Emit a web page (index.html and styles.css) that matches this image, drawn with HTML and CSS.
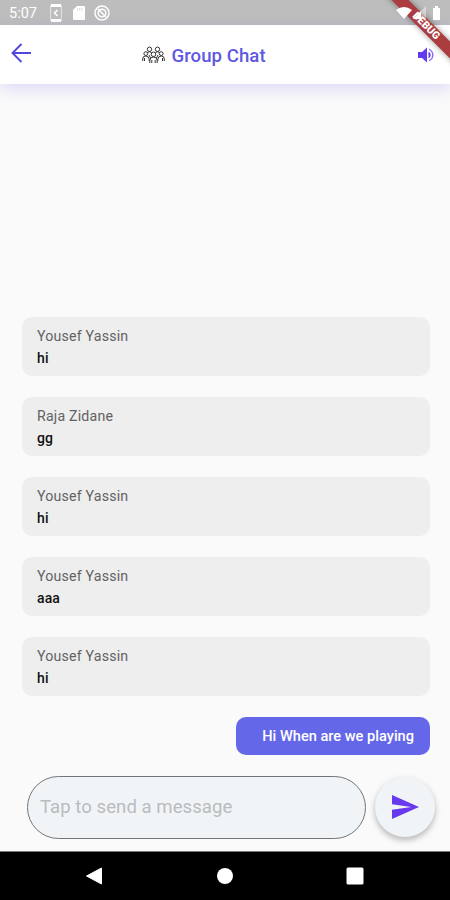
FILE: index.html
```html
<!DOCTYPE html>
<html lang="en">
<head>
<meta charset="utf-8">
<title>Group Chat</title>
<link rel="stylesheet" href="styles.css">
</head>
<body>
<div class="phone">
  <div class="status">
    <span class="time">5:07</span>
    <svg class="st-phone" width="12" height="18" viewBox="0 0 12 18"><rect x=".6" y=".6" width="10.800" height="16.800" rx="1.500" fill="none" stroke="#fff" stroke-opacity=".6"/><path d="M1 0h10v3H1zM1 15h10v3H1z" fill="#fff"/><path d="M7.500 6 4.500 9l3 3" fill="none" stroke="#fff" stroke-width="1.500"/></svg>
    <svg class="st-sd" width="12" height="14" viewBox="0 0 12 14"><path d="M4 0h7q1 0 1 1v12q0 1-1 1H1q-1 0-1-1V4z" fill="#fff"/><path d="M4.500 2v2.500M6.700 2v2.500M8.900 2v2.500" stroke="#bdbdbd" stroke-width=".6"/></svg>
    <svg class="st-sync" width="16" height="16" viewBox="0 0 16 16" fill="none" stroke="#fff"><circle cx="8" cy="8" r="7" stroke-width="1.500"/><circle cx="8" cy="8" r="3.800" stroke-width="1.500"/><path d="m4 4 8 8" stroke-width="1.500"/></svg>
    <span class="spacer"></span>
    <svg class="st-right" width="48" height="18" viewBox="0 0 48 18" fill="#fff"><path d="M0 6q8-6 16 0L8 15z"/><path d="M30 2v13H17z" opacity=".45"/><path d="M25 7v8h-8z"/><path d="M37 4h2V2h3v2h2v12h-7z"/></svg>
  </div>
  <header class="bar">
    <svg class="back" width="20" height="20" viewBox="0 0 20 20" fill="none" stroke="#5146dc" stroke-width="1.900"><path d="M10.500 1 1.500 10l9 9M2 10h18"/></svg>
    <div class="title">
      <svg class="people" width="23" height="18" viewBox="0 0 23 18" fill="none" stroke="#333" stroke-width="1"><circle cx="7.500" cy="3.300" r="2.200"/><circle cx="15.500" cy="3.300" r="2.200"/><circle cx="3.800" cy="7.600" r="1.900"/><circle cx="19.200" cy="7.600" r="1.900"/><circle cx="11.500" cy="8.300" r="2.300"/><path d="M.7 15v-2q0-3 3-3t3.500 3v2M22.300 15v-2q0-3-3-3t-3.500 3v2M7.800 17v-2.500q0-3.500 3.700-3.500t3.700 3.500V17M5.500 6.500q2-1.500 4 0M13.500 6.500q2-1.500 4 0M2.500 12v3M20.500 12v3M9.800 14v3M13.200 14v3M7 9l1.500 3M16 9l-1.500 3"/></svg>
      <h1>Group Chat</h1>
    </div>
    <svg class="sound" width="16" height="16" viewBox="0 0 16 16" fill="#613bec"><path d="M0 5h4l5-4.500v15L4 11H0z"/><path d="M10.500 4.500q2.200 1.200 2.200 3.500t-2.200 3.500z"/><path d="M11 1.500q4.500 2 4.500 6.500T11 14.500v-1.500Q14 12 14 8t-3-5z" opacity=".75"/></svg>
  </header>
  <main class="chat">
    <article class="card"><p class="name">Yousef Yassin</p><p class="text">hi</p></article>
    <article class="card"><p class="name">Raja Zidane</p><p class="text">gg</p></article>
    <article class="card"><p class="name">Yousef Yassin</p><p class="text">hi</p></article>
    <article class="card"><p class="name">Yousef Yassin</p><p class="text">aaa</p></article>
    <article class="card"><p class="name">Yousef Yassin</p><p class="text">hi</p></article>
    <article class="mine">Hi When are we playing</article>
  </main>
  <div class="composer">
    <div class="field">Tap to send a message</div>
    <div class="send"><svg width="27" height="24" viewBox="0 0 28 24" preserveAspectRatio="none" fill="#6839ee"><path d="M0 0l28 12L0 24v-9.300L20 12 0 9.300z"/></svg></div>
  </div>
  <nav class="nav">
    <svg width="18" height="18" viewBox="0 0 18 18"><path d="M1.500 9 16.500 1v16z" fill="#fff" stroke="#fff" stroke-linejoin="round"/></svg>
    <svg width="18" height="18" viewBox="0 0 18 18"><circle cx="9" cy="9" r="8" fill="#fff"/></svg>
    <svg width="18" height="18" viewBox="0 0 18 18"><rect x=".5" y=".5" width="17" height="17" rx="1.500" fill="#fff"/></svg>
  </nav>
  <div class="ribbon"><span>DEBUG</span></div>
</div>
</body>
</html>
```
FILE: styles.css
```css
* { box-sizing: border-box; margin: 0; padding: 0; }
body { font-family: Roboto, sans-serif; background: #fafafa; }
svg { display: block; flex: none; }
.phone { position: relative; width: 450px; height: 900px; overflow: hidden; display: flex; flex-direction: column; background: #fafafa; }
.status { height: 25px; background: #bdbdbd; display: flex; align-items: center; padding: 1px 6px 0 9px; flex: none; }
.time { width: 41px; font-size: 14.500px; color: #fff; }
.st-sd { margin-left: 11px; }
.st-sync { margin-left: 9px; }
.st-right { position: relative; z-index: 2; }
.spacer { flex: 1; }
.bar { height: 58.500px; flex: none; background: #fff; display: flex; align-items: center; padding: 0 16px 0 10.500px; box-shadow: 0 5px 16px rgba(98, 91, 235, .2); }
.back { margin-top: -3px; }
.title { display: flex; align-items: center; gap: 6.500px; margin: 0 auto 0 111.500px; }
.title h1 { font-size: 18.600px; line-height: 22px; font-weight: 500; color: #6058e0; margin-top: 3px; letter-spacing: .05px; }
.people { margin-top: 2px; }
.sound { margin-top: 2px; }
.chat { flex: 1; display: flex; flex-direction: column; justify-content: flex-end; gap: 21.200px; padding: 0 20.500px 20.800px 21.500px; }
.card { height: 59px; border-radius: 10px; background: #eee; padding: 9px 15.500px; }
.card + .mine { margin-top: -.4px; }
.name { font-size: 14.200px; line-height: 20px; color: #626262; letter-spacing: .18px; }
.text { font-size: 14px; line-height: 20px; margin-top: 2px; font-weight: 500; color: #111; letter-spacing: .1px; }
.mine { align-self: flex-end; height: 37.500px; border-radius: 10px; background: #6567e9; color: #fff; font-size: 14.600px; font-weight: 500; line-height: 38px; padding: 0 15.500px 0 26px; }
.composer { flex: none; height: 75px; display: flex; align-items: flex-start; padding: 0 15px 0 26.500px; gap: 9px; }
.field { width: 339.500px; height: 63px; border: 1px solid #737679; border-radius: 32px; background: #f0f4f7; color: #b9bcbe; font-size: 18.600px; line-height: 61px; padding-left: 12.500px; letter-spacing: .03px; }
.send { width: 60px; height: 60px; border-radius: 50%; margin-top: 1px; background: #f0f4f7; box-shadow: 0 3px 6px rgba(0, 0, 0, .28); display: flex; align-items: center; justify-content: center; padding-top: 1px; }
.nav { flex: none; height: 49.500px; background: #000; border-top: 1px solid #777; display: flex; justify-content: space-between; padding: 15px 86px 0 85px; }
.ribbon { position: absolute; z-index: 1; left: 370.500px; top: 19.500px; width: 110px; height: 12px; transform: rotate(45deg); background: #ab3c40; color: #fff; text-align: center; font-size: 10.500px; line-height: 12px; font-weight: 900; box-shadow: 0 0 6px rgba(0, 0, 0, .4); }
```
